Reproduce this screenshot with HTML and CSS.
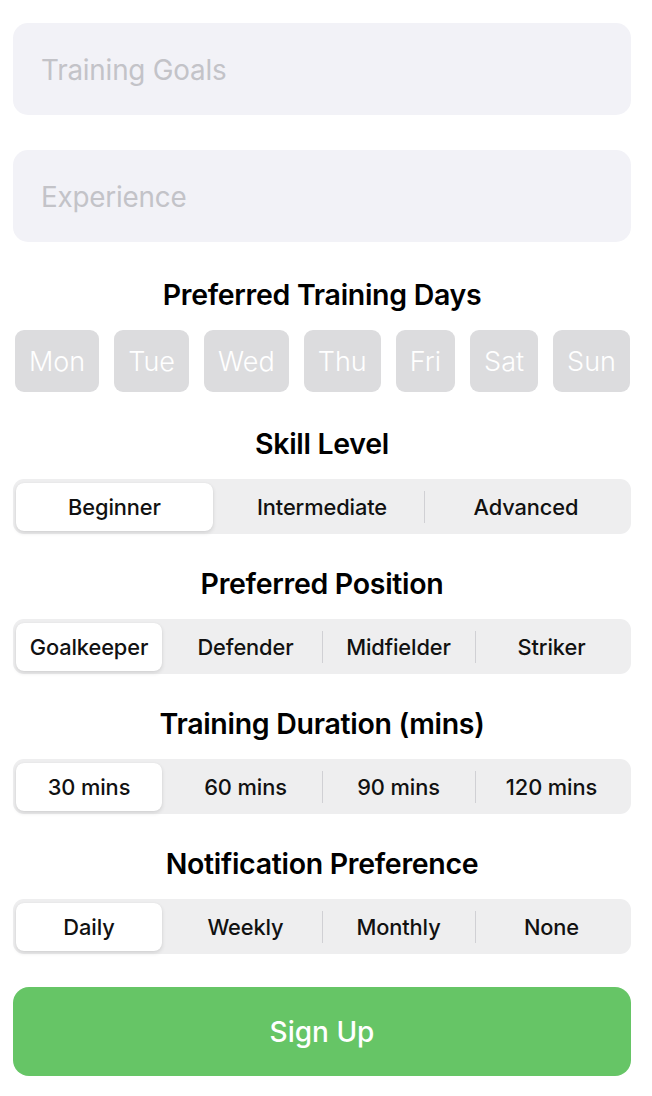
FILE: index.html
```html
<!DOCTYPE html>
<html>
<head>
<meta charset="utf-8">
<link rel="stylesheet" href="styles.css">
</head>
<body>
<main class="form">
  <div class="field">Training Goals</div>
  <div class="field field-2">Experience</div>

  <h2 class="heading h-days">Preferred Training Days</h2>
  <div class="days">
    <span class="day">Mon</span>
    <span class="day">Tue</span>
    <span class="day">Wed</span>
    <span class="day">Thu</span>
    <span class="day">Fri</span>
    <span class="day">Sat</span>
    <span class="day">Sun</span>
  </div>

  <h2 class="heading">Skill Level</h2>
  <div class="seg seg-3">
    <span class="opt sel">Beginner</span>
    <span class="opt">Intermediate</span>
    <span class="opt div">Advanced</span>
  </div>

  <h2 class="heading">Preferred Position</h2>
  <div class="seg">
    <span class="opt sel">Goalkeeper</span>
    <span class="opt">Defender</span>
    <span class="opt div">Midfielder</span>
    <span class="opt div">Striker</span>
  </div>

  <h2 class="heading">Training Duration (mins)</h2>
  <div class="seg">
    <span class="opt sel">30 mins</span>
    <span class="opt">60 mins</span>
    <span class="opt div">90 mins</span>
    <span class="opt div">120 mins</span>
  </div>

  <h2 class="heading">Notification Preference</h2>
  <div class="seg">
    <span class="opt sel">Daily</span>
    <span class="opt">Weekly</span>
    <span class="opt div">Monthly</span>
    <span class="opt div">None</span>
  </div>

  <button class="signup">Sign Up</button>
</main>
</body>
</html>
```
FILE: styles.css
```css
html, body {
  margin: 0;
  padding: 0;
  background: #ffffff;
}
body {
  font-family: Inter, "Noto Sans", sans-serif;
  color: #000;
}
.form {
  padding: 23px 21px 0 13px;
  display: flex;
  flex-direction: column;
}
.field {
  height: 92px;
  box-sizing: border-box;
  background: #f2f2f7;
  border-radius: 15px;
  padding-left: 28px;
  padding-top: 2px;
  display: flex;
  align-items: center;
  font-size: 27.8px;
  color: #c3c3c8;
  letter-spacing: -0.2px;
}
.field-2 {
  margin-top: 35px;
}
.heading {
  margin: 0;
  height: 34px;
  line-height: 34px;
  font-size: 28.5px;
  font-weight: 600;
  text-align: center;
  letter-spacing: -0.3px;
  margin-top: 18px;
  margin-bottom: 18px;
}
.h-days {
  margin-top: 36px;
}
.days {
  display: flex;
  justify-content: space-between;
  padding: 0 1px 0 2px;
}
.day {
  height: 62px;
  padding: 0 14px;
  background: #dcdcde;
  border-radius: 9px;
  color: #ffffff;
  font-size: 27px;
  font-weight: 300;
  display: flex;
  align-items: center;
  justify-content: center;
}
.days + .heading {
  margin-top: 35px;
}
.seg {
  height: 55px;
  box-sizing: border-box;
  background: #eeeeef;
  border-radius: 11px;
  padding: 4px 3px 3px 3px;
  display: grid;
  grid-template-columns: repeat(4, 1fr);
}
.seg-3 {
  grid-template-columns: repeat(3, 1fr);
}
.opt {
  position: relative;
  display: flex;
  align-items: center;
  justify-content: center;
  font-size: 21.8px;
  font-weight: 500;
  letter-spacing: -0.1px;
  color: #111;
  border-radius: 8px;
  padding-bottom: 1px;
}
.opt.sel {
  background: #ffffff;
  box-shadow: 0 2px 4px rgba(0, 0, 0, 0.12), 0 0 1px rgba(0, 0, 0, 0.08);
  margin-right: 7px;
}
.opt.div::before {
  content: "";
  position: absolute;
  left: 0;
  top: 8px;
  bottom: 8px;
  width: 1px;
  background: #d0d0d4;
}
.seg + .heading {
  margin-top: 33px;
}
.signup {
  margin-top: 33px;
  height: 89px;
  border: none;
  border-radius: 16px;
  background: #66c566;
  color: #ffffff;
  font-family: Inter, "Noto Sans", sans-serif;
  font-size: 28px;
  font-weight: 500;
}
```
